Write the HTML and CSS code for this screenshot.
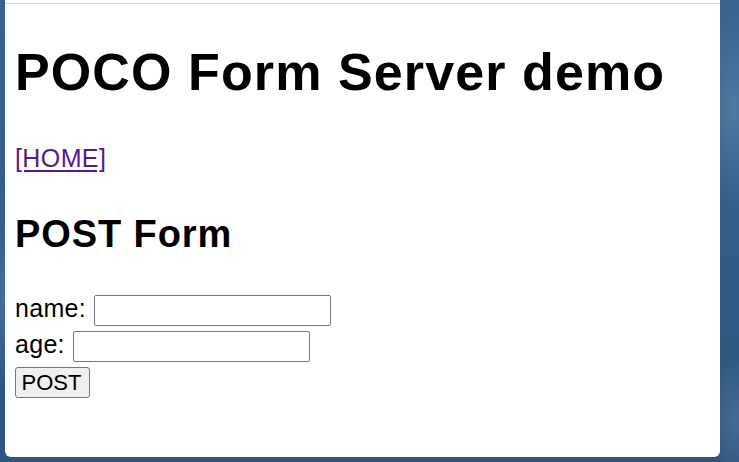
FILE: index.html
```html
<!DOCTYPE html>
<html lang="en">
<head>
<meta charset="utf-8">
<title>POCO Form Server demo</title>
<link rel="stylesheet" href="styles.css">
</head>
<body>
<div class="window">
  <div class="chrome-edge"></div>
  <div class="page">
    <h1 class="title">POCO Form Server demo</h1>
    <p class="nav"><a class="home-link" href="#">[HOME]</a></p>
    <h2 class="subtitle">POST Form</h2>
    <form class="post-form">
      <div class="row"><span class="label">name:</span><input class="field" type="text" name="name"></div>
      <div class="row"><span class="label">age:</span><input class="field" type="text" name="age"></div>
      <div class="row"><button class="submit" type="button">POST</button></div>
    </form>
  </div>
</div>
</body>
</html>
```
FILE: styles.css
```css
html, body {
  margin: 0;
  padding: 0;
  height: 462px;
  overflow: hidden;
}
body {
  background:
    radial-gradient(ellipse 60px 140px at 735px 110px, rgba(110,150,190,0.45), rgba(110,150,190,0) 70%),
    radial-gradient(ellipse 40px 90px at 736px 420px, rgba(100,140,180,0.4), rgba(100,140,180,0) 70%),
    radial-gradient(ellipse 14px 120px at 2px 300px, rgba(110,150,190,0.35), rgba(110,150,190,0) 70%),
    linear-gradient(180deg, #3a6490 0%, #335d88 50%, #2d5580 100%);
  font-family: "Liberation Sans", Arial, Helvetica, sans-serif;
  color: #000;
}
.window {
  margin-left: 5px;
  width: 715px;
  height: 457px;
  background: #fff;
  border-radius: 0 0 6px 6px;
  overflow: hidden;
}
.chrome-edge {
  height: 3px;
  border-bottom: 1px solid #d9d9d9;
}
.page {
  padding: 0 10px;
}
.title {
  margin: 38px 0 0;
  font-size: 52px;
  line-height: 60px;
  font-weight: bold;
  letter-spacing: 1.1px;
  white-space: nowrap;
}
.nav {
  margin: 41px 0 0;
  font-size: 25px;
  line-height: 30px;
  letter-spacing: 0.4px;
}
.home-link {
  color: #551a8b;
  text-decoration: underline;
  text-underline-offset: 3px;
}
.subtitle {
  margin: 39px 0 0;
  font-size: 38px;
  line-height: 44px;
  font-weight: bold;
  letter-spacing: 0.9px;
}
.post-form {
  margin: 39px 0 0;
  display: flex;
  flex-direction: column;
  gap: 5px;
}
.row {
  display: flex;
  align-items: flex-start;
  gap: 8px;
  height: 31px;
}
.label {
  font-size: 25px;
  line-height: 27px;
  letter-spacing: 0.3px;
}
.field {
  box-sizing: border-box;
  width: 237px;
  height: 31px;
  margin: 0;
  border: 1px solid #767676;
  border-radius: 2px;
  background: #fff;
  padding: 0 4px;
  font-family: "Liberation Sans", Arial, sans-serif;
  font-size: 20px;
}
.submit {
  box-sizing: border-box;
  width: 75px;
  height: 31px;
  margin: 0;
  padding: 0 2px 0 0;
  border: 1px solid #767676;
  border-radius: 3px;
  background: #efefef;
  color: #000;
  font-family: "Liberation Sans", Arial, sans-serif;
  font-size: 22px;
  line-height: 29px;
}
```
